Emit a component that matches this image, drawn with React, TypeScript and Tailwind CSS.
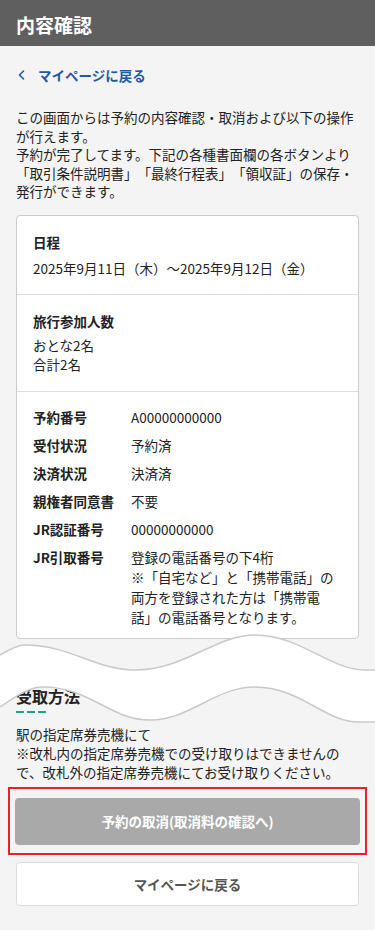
// 予約内容確認ページ
const rows: { label: string; value: string[] }[] = [
  { label: "予約番号", value: ["A00000000000"] },
  { label: "受付状況", value: ["予約済"] },
  { label: "決済状況", value: ["決済済"] },
  { label: "親権者同意書", value: ["不要"] },
  { label: "JR認証番号", value: ["00000000000"] },
  {
    label: "JR引取番号",
    value: [
      "登録の電話番号の下4桁",
      "※「自宅など」と「携帯電話」の",
      "両方を登録された方は「携帯電",
      "話」の電話番号となります。",
    ],
  },
];

function TornBand() {
  const top = "M0,35 C10,29 18,25 25,25 C70,25 95,50 135,50 C185,50 215,15 255,15 C300,15 330,50 365,50 L375,50";
  const bottom = "M0,87 C15,77 28,67 43,67 C90,67 110,100 150,100 C190,100 215,67 255,67 C300,67 325,102 358,102 L375,102";
  const fill =
    "M0,35 C10,29 18,25 25,25 C70,25 95,50 135,50 C185,50 215,15 255,15 C300,15 330,50 365,50 L375,50 L375,102 L358,102 C325,102 300,67 255,67 C215,67 190,100 150,100 C110,100 90,67 43,67 C28,67 15,77 0,87 Z";
  return (
    <svg className="pointer-events-none absolute left-0 top-[620px]" width="375" height="115" viewBox="0 0 375 115">
      <path d={fill} fill="#fff" />
      <path d={top} fill="none" stroke="#c9c9c9" strokeWidth="1.5" />
      <path d={bottom} fill="none" stroke="#c9c9c9" strokeWidth="1.5" />
    </svg>
  );
}

export default function App() {
  return (
    <div className="relative min-h-[930px] bg-[#f4f4f4] font-['Noto_Sans_CJK_JP','Noto_Sans',sans-serif] text-[#222] [text-spacing-trim:space-all]">
      {/* ヘッダー */}
      <header className="flex h-[46px] items-center bg-[#5f5f5f] px-4 pt-[3px]">
        <h1 className="text-[19px] font-bold leading-none text-white">内容確認</h1>
      </header>

      <main className="px-4 pb-6">
        {/* 戻るリンク */}
        <a className="mt-[19px] flex h-5 items-center text-[13.5px] font-bold text-[#2259a6]">
          <svg className="ml-[2px] mr-[13px]" width="7" height="10" viewBox="0 0 7 10" fill="none">
            <path d="M5.5 1L1.5 5l4 4" stroke="currentColor" strokeWidth="1.6" strokeLinecap="round" strokeLinejoin="round" />
          </svg>
          マイページに戻る
        </a>

        <p className="mt-[23px] text-[13.5px] leading-[18.5px]">
          この画面からは予約の内容確認・取消および以下の操作が行えます。
          <br />
          予約が完了してます。下記の各種書面欄の各ボタンより「取引条件説明書」「最終行程表」「領収証」の保存・発行ができます。
        </p>

        {/* 予約内容カード */}
        <div className="mt-[14px] rounded border border-[#cbcbcb] bg-white">
          <section className="px-4 pt-4 pb-4">
            <h2 className="text-[13.5px] font-bold leading-5">日程</h2>
            <p className="mt-[6px] text-[13.5px] leading-5">2025年9月11日（木）～2025年9月12日（金）</p>
          </section>
          <section className="border-t border-[#dedede] px-4 pt-4 pb-[17px]">
            <h2 className="text-[13.5px] font-bold leading-5">旅行参加人数</h2>
            <p className="mt-[5px] text-[13.5px] leading-[19px]">
              おとな2名
              <br />
              合計2名
            </p>
          </section>
          <section className="flex flex-col gap-2 border-t border-[#dedede] px-4 pt-[15px] pb-[11px]">
            {rows.map((r) => (
              <div key={r.label} className="flex text-[13.5px] leading-5">
                <div className="w-[98px] shrink-0 font-bold">{r.label}</div>
                <div>
                  {r.value.map((v) => (
                    <div key={v}>{v}</div>
                  ))}
                </div>
              </div>
            ))}
          </section>
        </div>

        {/* 受取方法 */}
        <h2 className="mt-[46px] text-[16px] font-bold leading-[22px]">受取方法</h2>
        <div className="mt-1 flex gap-[3px]">
          <span className="h-[2.5px] w-[8px] bg-[#1aa39a]" />
          <span className="h-[2.5px] w-[8px] bg-[#1aa39a]" />
          <span className="h-[2.5px] w-[8px] bg-[#1aa39a]" />
        </div>
        <p className="mt-3 text-[13.5px] leading-[19px]">
          駅の指定席券売機にて
          <br />
          ※改札内の指定席券売機での受け取りはできませんので、改札外の指定席券売機にてお受け取りください。
        </p>

        {/* ボタン */}
        <div className="mx-[-8px] mt-[5px] border-2 border-[#e8202f] px-[5px] pt-[9px] pb-[8px]">
          <button className="flex h-[47px] w-full items-center justify-center rounded bg-[#a9a9a9] text-[13.5px] font-bold text-white">
            予約の取消(取消料の確認へ)
          </button>
        </div>
        <button className="mt-[7px] flex h-[44px] w-full items-center justify-center rounded border border-[#dcdcdc] bg-white text-[13.5px] font-bold text-[#555]">
          マイページに戻る
        </button>
      </main>

      <TornBand />
    </div>
  );
}
